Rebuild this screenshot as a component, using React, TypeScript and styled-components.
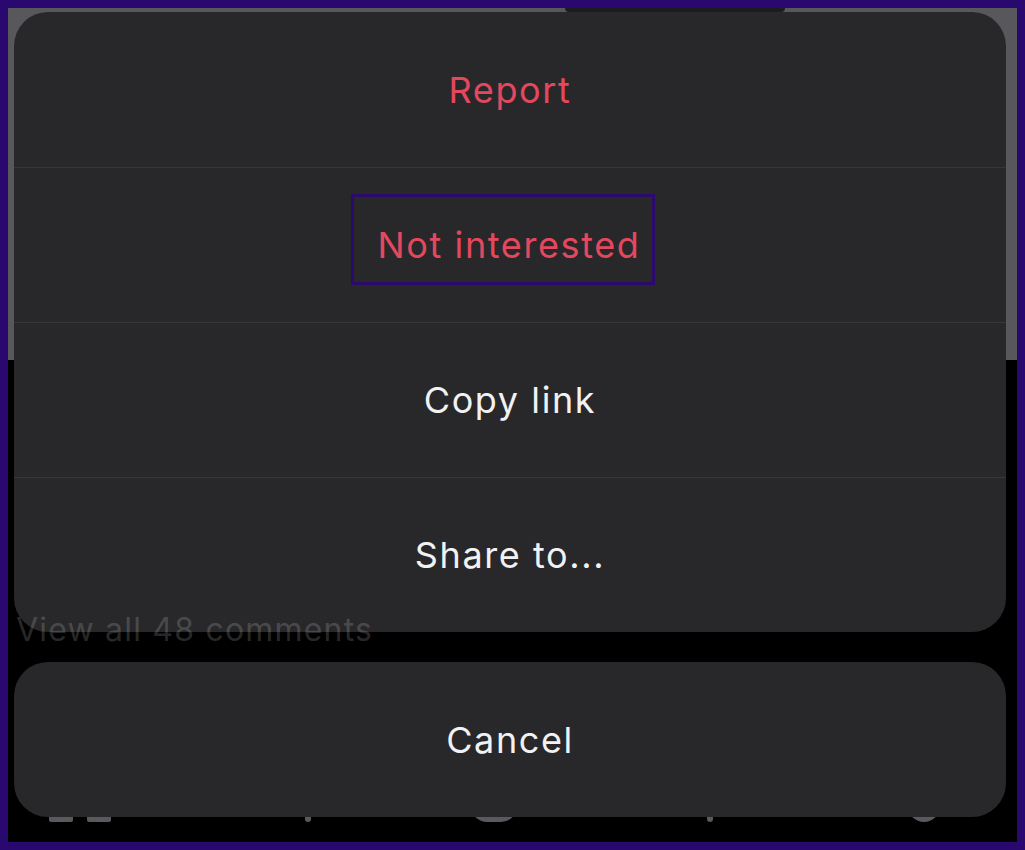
import styled, { createGlobalStyle } from "styled-components";

const GlobalStyle = createGlobalStyle`
  html, body {
    margin: 0;
    padding: 0;
    background: #29086f;
  }
  body {
    font-family: Inter, "Noto Sans", "Liberation Sans", sans-serif;
  }
`;

type Action = {
  label: string;
  danger?: boolean;
  marked?: boolean;
};

const actions: Action[] = [
  { label: "Report", danger: true },
  { label: "Not interested", danger: true, marked: true },
  { label: "Copy link" },
  { label: "Share to..." },
];

export default function App() {
  return (
    <>
      <GlobalStyle />
      <Frame>
        <Stage>
          <Backdrop>
            <MediaArea>
              <MediaShade />
            </MediaArea>
            <FeedArea>
              <NavRow>
                <NavStub $w={24} $shape="block" />
                <NavStub $w={24} $shape="block" />
                <NavGap $w={180} />
                <NavStub $w={6} $shape="point" />
                <NavGap $w={160} />
                <NavStub $w={46} $shape="round" />
                <NavGap $w={190} />
                <NavStub $w={6} $shape="point" />
                <NavGap $w={195} />
                <NavStub $w={32} $shape="round" />
              </NavRow>
            </FeedArea>
          </Backdrop>

          <Comments>View all 48 comments</Comments>

          <Sheet>
            <Group>
              {actions.map((a) => (
                <Row key={a.label}>
                  {a.marked ? (
                    <Marked>
                      <Label $danger={a.danger}>{a.label}</Label>
                    </Marked>
                  ) : (
                    <Label $danger={a.danger}>{a.label}</Label>
                  )}
                </Row>
              ))}
            </Group>
            <CancelGroup>
              <Label>Cancel</Label>
            </CancelGroup>
          </Sheet>
        </Stage>
      </Frame>
    </>
  );
}

const Frame = styled.div`
  width: 1025px;
  height: 850px;
  box-sizing: border-box;
  border: 8px solid #29086f;
  background: #000;
  overflow: hidden;
`;

const Stage = styled.div`
  display: grid;
  width: 100%;
  height: 100%;

  & > * {
    grid-area: 1 / 1;
  }
`;

const Backdrop = styled.div`
  display: flex;
  flex-direction: column;
  height: 100%;
`;

const MediaArea = styled.div`
  height: 352px;
  background: #57575c;
  display: flex;
  justify-content: flex-end;
  padding-right: 232px;
`;

const MediaShade = styled.div`
  width: 220px;
  height: 4px;
  border-radius: 0 0 10px 10px;
  background: #1c1c1e;
`;

const FeedArea = styled.div`
  flex: 1;
  display: flex;
  flex-direction: column;
  justify-content: flex-end;
  background: #000;
  padding: 0 0 20px 41px;
`;

const NavRow = styled.div`
  display: flex;
  align-items: flex-end;
  height: 40px;
`;

const NavGap = styled.div<{ $w: number }>`
  width: ${({ $w }) => $w}px;
`;

const NavStub = styled.div<{ $w: number; $shape: "block" | "point" | "round" }>`
  width: ${({ $w }) => $w}px;
  margin-right: ${({ $shape }) => ($shape === "block" ? "14px" : "0")};
  height: ${({ $shape }) => ($shape === "point" ? "10px" : "30px")};
  background: #5a5a5e;
  border-radius: ${({ $shape }) =>
    $shape === "round" ? "0 0 16px 16px" : $shape === "point" ? "0 0 3px 3px" : "0 0 2px 2px"};
`;

const Comments = styled.div`
  z-index: 2;
  align-self: start;
  margin: 600px 0 0 8px;
  font-size: 32px;
  letter-spacing: 1.2px;
  line-height: 44px;
  color: rgba(255, 255, 255, 0.17);
  pointer-events: none;
`;

const Sheet = styled.div`
  z-index: 1;
  display: flex;
  flex-direction: column;
  gap: 30px;
  padding: 4px 11px 0 6px;
`;

const Group = styled.div`
  display: flex;
  flex-direction: column;
  background: #28282a;
  border-radius: 34px;
  overflow: hidden;
`;

const Row = styled.div`
  height: 155px;
  box-sizing: border-box;
  display: flex;
  align-items: center;
  justify-content: center;

  & + & {
    border-top: 1.5px solid #37373a;
  }
`;

const CancelGroup = styled.div`
  height: 155px;
  display: flex;
  align-items: center;
  justify-content: center;
  background: #28282a;
  border-radius: 34px;
`;

const Marked = styled.div`
  display: flex;
  align-items: center;
  height: 91px;
  box-sizing: border-box;
  border: 3px solid #2a0a6c;
  padding: 12px 12px 0 24px;
  transform: translateX(-7px) translateY(-6px);
`;

const Label = styled.span<{ $danger?: boolean }>`
  font-size: 36px;
  letter-spacing: 1.6px;
  line-height: 44px;
  font-weight: 400;
  color: ${({ $danger }) => ($danger ? "#e4485f" : "#f2f2f4")};
`;
